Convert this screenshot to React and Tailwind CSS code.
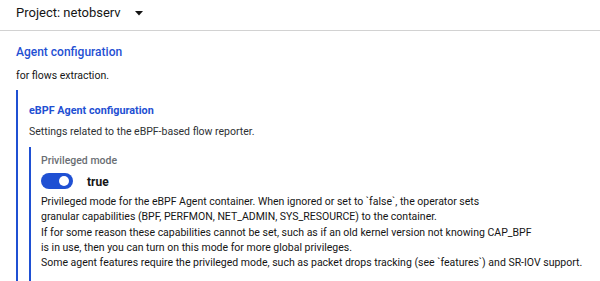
export default function App() {
  return (
    <div className="w-[600px] h-[281px] overflow-hidden bg-white text-[#151515] font-['Roboto',sans-serif]">
      <div className="h-[31px] border-b border-[#d2d2d2] flex items-start pl-4 pt-[5px]">
        <span className="text-[13px] leading-[16px]">Project: netobserv</span>
        <svg className="ml-[14px] mt-[6px]" width="8" height="5" viewBox="0 0 8 5">
          <path d="M0 0 L8 0 L4 4.5 Z" fill="#151515" />
        </svg>
      </div>
      <div className="pl-4 pt-[13px]">
        <div className="text-[12px] font-medium text-[#1f50d3] leading-[16px]">Agent configuration</div>
        <div className="text-[10.5px] mt-[9px] leading-[14px]">for flows extraction.</div>
        <div className="mt-[7px] border-l-2 border-[#1f50d3] pl-[11px] pt-[14px] h-[200px]">
          <div className="text-[10.8px] font-bold text-[#1f50d3] leading-[14px]">eBPF Agent configuration</div>
          <div className="text-[10.5px] mt-[7px] leading-[14px] text-[#2e3134]">Settings related to the eBPF-based flow reporter.</div>
          <div className="mt-[8px] border-l-2 border-[#1f50d3] pl-[10px] pt-[7px] h-[200px]">
            <div className="text-[10.5px] font-medium text-[#6a6e73] leading-[14px]">Privileged mode</div>
            <div className="flex items-center mt-[5px] h-[16px]">
              <div className="w-[32px] h-[16px] rounded-full bg-[#1f50d3] flex items-center justify-end pr-[4px]">
                <div className="w-[10px] h-[10px] rounded-full bg-white" />
              </div>
              <span className="ml-[14px] text-[12px] font-bold leading-[16px] mt-[1px]">true</span>
            </div>
            <div className="mt-[5px] text-[10.5px] leading-[15.3px] text-[#151515] whitespace-nowrap">
              Privileged mode for the eBPF Agent container. When ignored or set to `false`, the operator sets
              <br />
              granular capabilities (BPF, PERFMON, NET_ADMIN, SYS_RESOURCE) to the container.
              <br />
              If for some reason these capabilities cannot be set, such as if an old kernel version not knowing CAP_BPF
              <br />
              is in use, then you can turn on this mode for more global privileges.
              <br />
              Some agent features require the privileged mode, such as packet drops tracking (see `features`) and SR-IOV support.
            </div>
          </div>
        </div>
      </div>
    </div>
  );
}
